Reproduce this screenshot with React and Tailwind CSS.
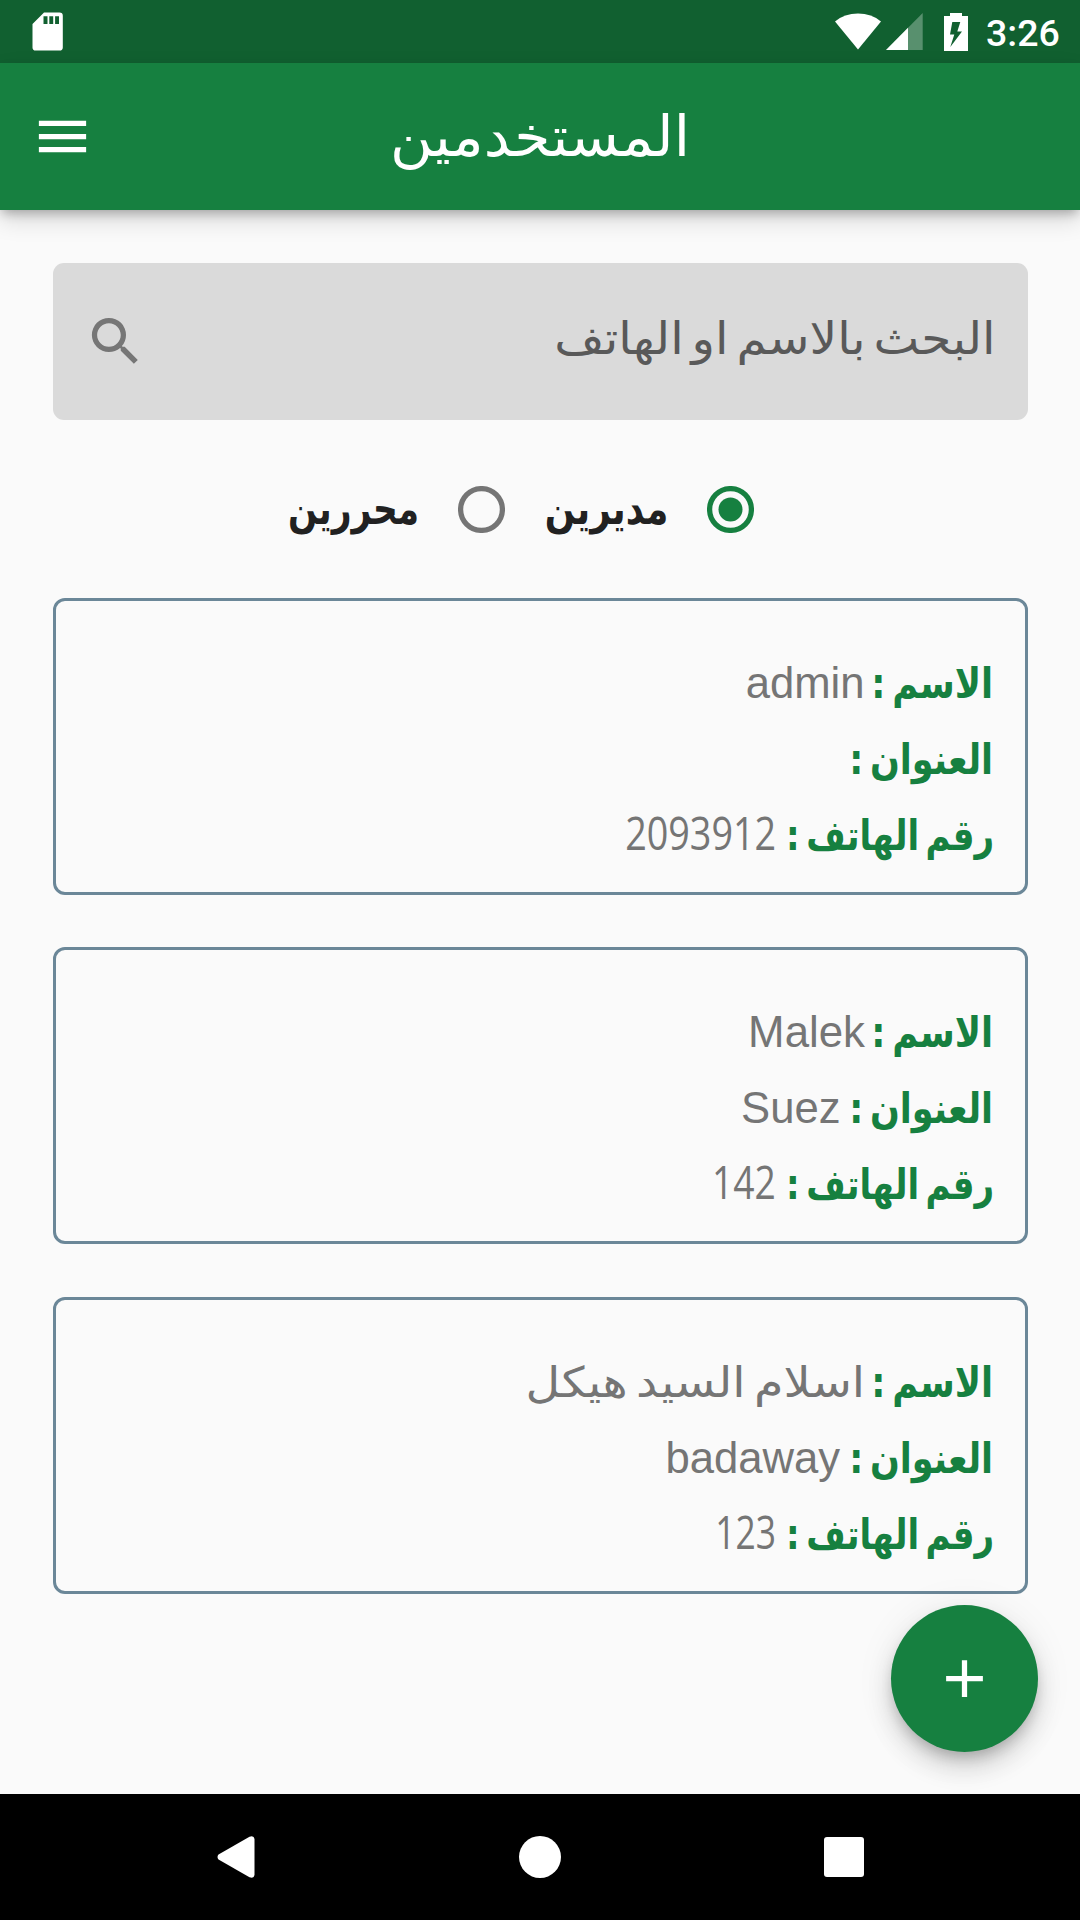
import React from "react";
import { MdMenu, MdSearch, MdAdd } from "react-icons/md";

const users = [
  {
    name: "admin",
    nameClass: "font-['Liberation_Sans'] text-[45px] scale-x-[0.97]",
    address: "",
    addressClass: "",
    phone: "2093912",
    phoneClass: "scale-x-[0.82]",
  },
  {
    name: "Malek",
    nameClass: "font-['Liberation_Sans'] text-[45px] scale-x-[0.974]",
    address: "Suez",
    addressClass: "scale-x-[0.97]",
    phone: "142",
    phoneClass: "scale-x-[0.81]",
  },
  {
    name: "اسلام السيد هيكل",
    nameClass: "font-['DejaVu_Sans'] text-[42px] [word-spacing:-6px] scale-x-[1.135]",
    address: "badaway",
    addressClass: "scale-x-[0.97]",
    phone: "123",
    phoneClass: "scale-x-[0.77]",
  },
];

function StatusBar() {
  return (
    <div className="flex h-[63px] items-center bg-[#116030] pl-8 pr-[21px] text-white">
      <svg className="h-[39px] w-[31px]" viewBox="0 0 31 39" fill="currentColor">
        <path
          fillRule="evenodd"
          d="M12 .5H27.5A3.3 3.3 0 0 1 30.8 3.8V35A3.3 3.3 0 0 1 27.5 38.5H3.8A3.3 3.3 0 0 1 .5 35V12ZM11.5 4.2V12H15.5V4.2ZM17.3 4.2V12H21.2V4.2ZM23.1 4.2V12H27V4.2Z"
        />
      </svg>
      <div className="ml-auto flex items-center">
        <svg className="h-[37px] w-[46px]" viewBox="0 0 46 37" fill="currentColor">
          <path d="M0 8.4Q9.5 .5 23 .5T46 8.4L23 36.5Z" />
        </svg>
        <svg className="ml-[5px] h-[37px] w-[37px]" viewBox="0 0 37 37" fill="currentColor">
          <path d="M0 37 36.7 0V37Z" opacity=".3" />
          <path d="M0 37 22 14.8V37Z" />
        </svg>
        <svg className="ml-[21px] h-[38px] w-6" viewBox="0 0 24 38" fill="currentColor">
          <path
            fillRule="evenodd"
            d="M6 0H18V3H24V38H0V3H6ZM8.3 9 6 21.5H10.3L6.3 34 18 18.5H13.3L16.3 9Z"
          />
        </svg>
        <span className="ml-[18px] h-[63px] w-[73px] pt-[2px] font-['Roboto'] text-[37.5px] font-medium leading-[63px]">
          3:26
        </span>
      </div>
    </div>
  );
}

function Header() {
  return (
    <header className="relative z-10 grid h-[147px] grid-cols-[126px_1fr_126px] items-center bg-[#168040] text-white shadow-[0_5px_10px_-2px_rgba(0,0,0,0.26),0_10px_22px_0_rgba(0,0,0,0.14)]">
      <MdMenu className="ml-[31px] size-[63px]" />
      <h1 className="scale-x-[1.045] whitespace-nowrap text-center font-['DejaVu_Sans',sans-serif] text-[56px] leading-[90px]">
        المستخدمين
      </h1>
    </header>
  );
}

function Radio({ checked }) {
  return (
    <svg
      className={checked ? "size-[47px] text-[#168040]" : "size-[47px] text-[#757575]"}
      viewBox="0 0 47 47"
    >
      <circle cx="23.5" cy="23.5" r="20.9" fill="none" stroke="currentColor" strokeWidth="5.25" />
      {checked && <circle cx="23.5" cy="23.5" r="12" fill="currentColor" />}
    </svg>
  );
}

function Row({ label, labelBox, labelClass, value, valueClass }) {
  return (
    <div className="flex h-[76px] items-baseline whitespace-nowrap leading-[76px]">
      <div className={labelBox}>
        <span
          className={`inline-block origin-right font-['DejaVu_Sans_Condensed','DejaVu_Sans',sans-serif] text-[42px] font-bold text-[#168040] [word-spacing:-6px] ${labelClass}`}
        >
          {label}
        </span>
      </div>
      <span className={`origin-right leading-none text-[#757575] ${valueClass}`}>{value}</span>
    </div>
  );
}

function UserCard({ user }) {
  return (
    <article className="h-[297px] rounded-xl border-[3px] border-[#6b8798] pr-[31px] pt-[45px]">
      <Row
        label="الاسم :"
        labelBox="w-[128.5px]"
        labelClass="scale-x-[0.936]"
        value={user.name}
        valueClass={user.nameClass}
      />
      <Row
        label="العنوان :"
        labelBox="w-[153px]"
        labelClass="scale-x-[0.927]"
        value={user.address}
        valueClass={`font-['Liberation_Sans'] text-[45px] ${user.addressClass}`}
      />
      <Row
        label="رقم الهاتف :"
        labelBox="w-[217.5px]"
        labelClass="scale-x-[0.9]"
        value={user.phone}
        valueClass={`font-['Open_Sans'] text-[46px] ${user.phoneClass}`}
      />
    </article>
  );
}

function NavBar() {
  return (
    <nav className="flex h-[126px] items-center bg-black pl-[217px] text-white">
      <svg className="h-[42px] w-[38px]" viewBox="0 0 38 42" fill="currentColor">
        <path d="M1.5 18.5 32.5 .8Q37 -.8 37.5 3V39Q37 42.8 32.5 41.2L1.5 23.5Q-.5 21 1.5 18.5Z" />
      </svg>
      <div className="ml-[264px] size-[42px] rounded-full bg-white" />
      <div className="ml-[263px] size-10 rounded-[3px] bg-white" />
    </nav>
  );
}

export default function App() {
  return (
    <div className="flex h-[1920px] w-[1080px] flex-col overflow-hidden bg-[#fafafa]">
      <StatusBar />
      <Header />
      <main dir="rtl" className="relative flex-1 px-[52.5px] pt-[52.5px]">
        <div className="flex h-[157.5px] items-center justify-between rounded-[11px] bg-[#dadada] pl-[31px] pr-8">
          <span className="origin-right scale-x-[1.08] whitespace-nowrap pb-[5px] font-['DejaVu_Sans',sans-serif] text-[45px] leading-[70px] text-[#595959] [word-spacing:-7px]">
            البحث بالاسم او الهاتف
          </span>
          <MdSearch className="size-[63px] text-[#767676]" />
        </div>

        <div className="mt-[51px] flex h-[76px] items-center whitespace-nowrap pr-[273.5px] font-['DejaVu_Sans_Condensed','DejaVu_Sans',sans-serif] text-[44px] font-bold leading-[76px] text-[#212121]">
          <Radio checked />
          <div className="mr-[39px] w-[163px]">
            <span className="inline-block origin-right scale-x-[0.9]">مديرين</span>
          </div>
          <Radio />
          <div className="mr-[39px]">
            <span className="inline-block origin-right scale-x-[0.868]">محررين</span>
          </div>
        </div>

        <div className="mt-[50.9px] flex flex-col gap-[52.5px]">
          {users.map((user) => (
            <UserCard key={user.phone} user={user} />
          ))}
        </div>

        <button className="absolute bottom-[42px] right-[42px] flex size-[147px] items-center justify-center rounded-full bg-[#168040] text-white shadow-[0_8px_13px_-3px_rgba(0,0,0,0.2),0_16px_26px_0_rgba(0,0,0,0.14),0_3px_40px_0_rgba(0,0,0,0.07)]">
          <MdAdd className="size-[63px]" />
        </button>
      </main>
      <NavBar />
    </div>
  );
}
